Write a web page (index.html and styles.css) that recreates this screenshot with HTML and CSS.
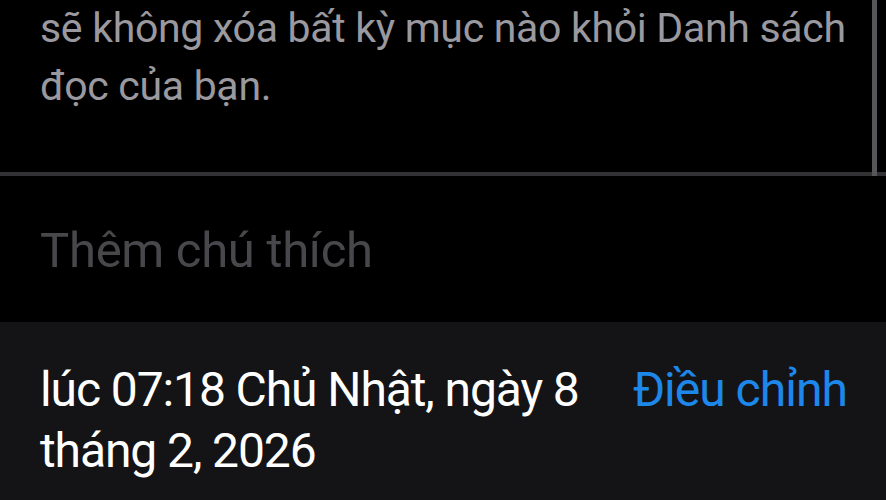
FILE: index.html
```html
<!DOCTYPE html>
<html lang="vi">
<head>
    <meta charset="UTF-8">
    <meta name="viewport" content="width=device-width, initial-scale=1.0">
    <title>Ghi chú</title>
    <link rel="stylesheet" href="styles.css">
</head>
<body>
    <div class="sheet">
        <div class="note">
            <p class="note-text">sẽ không xóa bất kỳ mục nào khỏi Danh sách đọc của bạn.</p>
        </div>
        <div class="divider"></div>
        <div class="scrollbar"></div>
        <div class="caption">Thêm chú thích</div>
        <div class="footer">
            <div class="timestamp">lúc 07:18 Chủ Nhật, ngày 8 tháng 2, 2026</div>
            <button class="adjust">Điều chỉnh</button>
        </div>
    </div>
</body>
</html>
```

FILE: styles.css
```css
body {
    margin: 0;
    background-color: #000000;
    font-family: 'Roboto', 'Noto Sans', sans-serif;
}
.sheet {
    position: relative;
    width: 886px;
    height: 500px;
    display: flex;
    flex-direction: column;
    overflow: hidden;
}
.note {
    height: 172px;
    overflow: hidden;
    padding: 0 40px;
}
.note-text {
    margin: -1px 0 0 0;
    font-size: 41px;
    line-height: 58px;
    letter-spacing: -0.3px;
    color: #9a999f;
    width: 822px;
}
.scrollbar {
    position: absolute;
    top: 0;
    right: 9px;
    width: 5px;
    height: 176px;
    background-color: #56565a;
}
.divider {
    height: 4px;
    background-color: #333336;
}
.caption {
    padding: 45px 40px 0;
    height: 101px;
    font-size: 49px;
    line-height: 60px;
    letter-spacing: -0.3px;
    color: #48474b;
}
.footer {
    flex: 1;
    background-color: #141416;
    display: flex;
    justify-content: space-between;
    align-items: flex-start;
    padding: 37px 39px 0 40px;
}
.timestamp {
    width: 550px;
    font-size: 48px;
    line-height: 61px;
    letter-spacing: -1.1px;
    color: #ffffff;
}
.adjust {
    background: none;
    border: none;
    padding: 0;
    font-family: inherit;
    font-size: 48px;
    line-height: 61px;
    letter-spacing: -1px;
    color: #1e87ea;
    cursor: pointer;
}
```
